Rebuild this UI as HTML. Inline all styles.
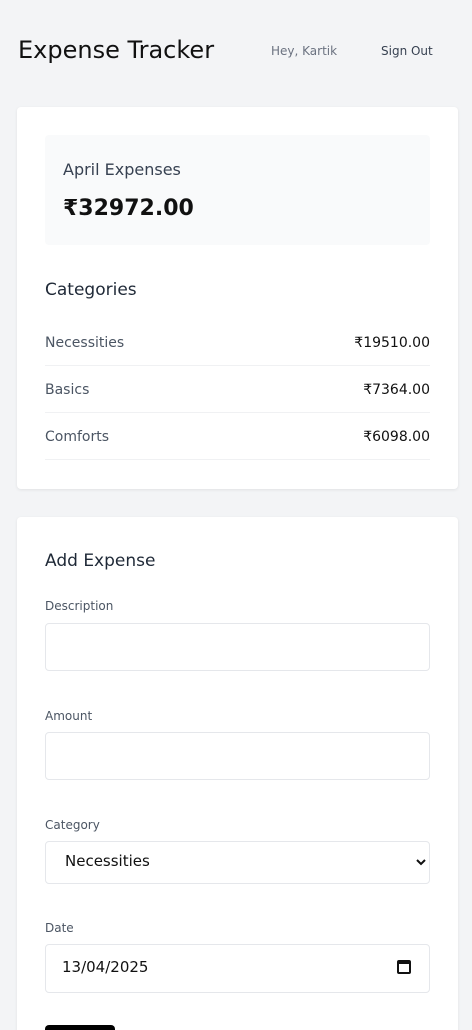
<!DOCTYPE html>
<html><head><meta charset="utf-8"><style>
*{box-sizing:border-box;margin:0;padding:0}
html,body{width:472px;height:1030px;overflow:hidden}
body{background:#f3f4f6;font-family:"DejaVu Sans","Liberation Sans",sans-serif;position:relative;color:#111827}
.a{position:absolute;white-space:nowrap}
.card{position:absolute;left:17px;width:441px;background:#fff;border-radius:4px;box-shadow:0 1px 3px rgba(0,0,0,.08)}
.in{position:absolute;left:45px;width:385px;background:#fff;border:1px solid #e5e7eb;border-radius:4px}
.lbl{font-size:12px;color:#4b5563}
.row{position:absolute;left:45px;width:385px;height:47px;border-bottom:1px solid #f0f1f3;font-size:14px}
.row span{position:absolute;top:16px;color:#4b5563}
.row b{position:absolute;right:0;top:16px;font-weight:normal;color:#111}
</style></head><body>
<div class="a" style="left:18px;top:36px;font-size:24px;color:#111">Expense Tracker</div>
<div class="a" style="left:271px;top:44px;font-size:12px;color:#6b7280">Hey, Kartik</div>
<div class="a" style="left:381px;top:44px;font-size:12px;color:#374151">Sign Out</div>

<div class="card" style="top:107px;height:382px"></div>
<div class="a" style="left:45px;top:135px;width:385px;height:110px;background:#f9fafb;border-radius:4px"></div>
<div class="a" style="left:63px;top:160px;font-size:16px;color:#374151">April Expenses</div>
<div class="a" style="left:63px;top:196px;font-size:22px;font-weight:bold;color:#111">₹32972.00</div>
<div class="a" style="left:45px;top:280px;font-size:17px;color:#1f2937">Categories</div>
<div class="row" style="top:319px"><span>Necessities</span><b>₹19510.00</b></div>
<div class="row" style="top:366px"><span>Basics</span><b>₹7364.00</b></div>
<div class="row" style="top:413px"><span>Comforts</span><b>₹6098.00</b></div>

<div class="card" style="top:517px;height:540px"></div>
<div class="a" style="left:45px;top:551px;font-size:17px;color:#1f2937">Add Expense</div>
<div class="a lbl" style="left:45px;top:599px">Description</div>
<div class="in" style="top:623px;height:48px"></div>
<div class="a lbl" style="left:45px;top:709px">Amount</div>
<div class="in" style="top:732px;height:48px"></div>
<div class="a lbl" style="left:45px;top:818px">Category</div>
<div class="in" style="top:841px;height:43px"></div>
<div class="a" style="left:65px;top:852px;font-size:15px;color:#111">Necessities</div>
<svg class="a" style="left:415px;top:857px" width="12" height="10" viewBox="0 0 12 10"><path d="M2 3l4 4 4-4" stroke="#111" stroke-width="2" fill="none"/></svg>
<div class="a lbl" style="left:45px;top:921px">Date</div>
<div class="in" style="top:944px;height:49px"></div>
<div class="a" style="left:62px;top:958px;font-size:15px;color:#111">13/04/2025</div>
<div class="a" style="left:397px;top:960px;width:14px;height:14px;border:2px solid #111;border-top-width:4px;border-radius:2px"></div>
<div class="a" style="left:45px;top:1025px;width:70px;height:20px;background:#000;border-radius:4px"></div>
</body></html>
